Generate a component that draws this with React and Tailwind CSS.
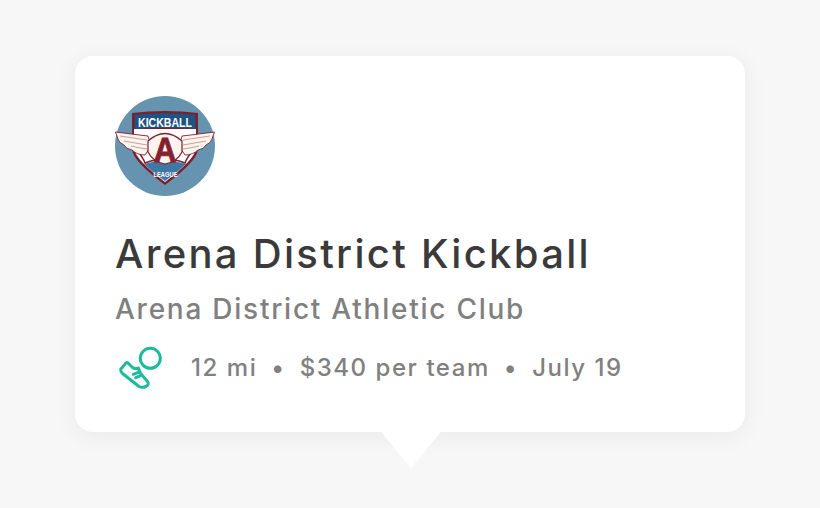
import React from "react";

function LeagueLogo() {
  return (
    <svg viewBox="0 0 100 100" className="w-[100px] h-[100px] shrink-0">
      <circle cx="50" cy="50" r="50" fill="#6693b0" />
      {/* shield */}
      <path d="M17 17 Q50 13 83 17 L83 54 Q81 66 50 89 Q19 66 17 54 Z" fill="#7c1f2c" />
      <path d="M19 33 H81 V53 Q79 64 50 86 Q21 64 19 53 Z" fill="#ffffff" />
      <path d="M19.500 19 Q50 15.500 80.500 19 L80.500 33 Q50 30 19.500 33 Z" fill="#1f5384" />
      <path d="M29 68 Q50 61 71 68 Q62 77 50 85 Q38 77 29 68 Z" fill="#3f78a4" />
      <path d="M25 58 Q29 64 30 67 Q50 59 70 67 Q71 64 75 58" fill="none" stroke="#7c1f2c" strokeWidth="1.400" />
      {/* wings */}
      <path d="M0.500 36 Q16 38 33 40 L36 50 L30 59 Q22 59 17 54 Q11 53 9 49 Q4 47 3 43 Z" fill="#fdf4ef" stroke="#7c1f2c" strokeWidth="0.900" />
      <path d="M99.500 36 Q84 38 67 40 L64 50 L70 59 Q78 59 83 54 Q89 53 91 49 Q96 47 97 43 Z" fill="#fdf4ef" stroke="#7c1f2c" strokeWidth="0.900" />
      <path d="M5 40 Q18 42 32 44 M9 45 Q20 47 32 49 M16 50 Q24 52 32 53" fill="none" stroke="#c99f96" strokeWidth="1" />
      <path d="M95 40 Q82 42 68 44 M91 45 Q80 47 68 49 M84 50 Q76 52 68 53" fill="none" stroke="#c99f96" strokeWidth="1" />
      {/* centre badge */}
      <path d="M33 45 Q50 30 67 45 L67 56 Q62 66 50 68 Q38 66 33 56 Z" fill="#fdf4ef" stroke="#7c1f2c" strokeWidth="1.200" />
      <text x="50" y="31" textAnchor="middle" fontFamily="Liberation Sans, sans-serif" fontWeight="700" fontSize="12" fill="#ffffff" textLength="54" lengthAdjust="spacingAndGlyphs">KICKBALL</text>
      <text x="50" y="65.500" textAnchor="middle" fontFamily="Liberation Sans, sans-serif" fontWeight="700" fontSize="35" fill="#86202e" textLength="23" lengthAdjust="spacingAndGlyphs" stroke="#86202e" strokeWidth="0.800">A</text>
      <text x="50.500" y="81" textAnchor="middle" fontFamily="Liberation Sans, sans-serif" fontWeight="700" fontSize="7.500" fill="#ffffff" textLength="24" lengthAdjust="spacingAndGlyphs">LEAGUE</text>
    </svg>
  );
}

function ShoeIcon() {
  return (
    <svg viewBox="0 0 48 48" className="w-[48px] h-[48px] shrink-0" fill="none" stroke="#1dbb9b" strokeWidth="3" strokeLinecap="round" strokeLinejoin="round">
      <circle cx="33.300" cy="13.300" r="10" />
      <path d="M8.700 18.300 L3.700 24.300 Q3.500 27 5.500 28.500 L22 41.500 Q25 43 29 41.500 Q32.500 39.500 30.500 36.500 L24 29 Q22 26 21.500 23 Q18 24.500 15.500 22.500 L11.500 18.500 Q10 17 8.700 18.300 Z" />
      <path d="M16.300 29.300 L21.300 27.300 M18.700 32.700 L23.500 30.700" />
    </svg>
  );
}

export default function App() {
  return (
    <div className="w-[820px] h-[508px] bg-[#f7f7f7] pt-14 pl-[75px] font-['Inter',sans-serif] overflow-hidden">
      <div className="relative w-[670px] h-[376px] bg-white rounded-[18px] shadow-[0_4px_24px_rgba(0,0,0,0.06)] pt-10 pl-10">
        <LeagueLogo />

        <h1 className="mt-[32px] text-[40px] leading-[52px] font-medium text-[#3a3a3a] tracking-[2.300px]">
          Arena District Kickball
        </h1>
        <p className="mt-[11px] text-[28px] leading-[36px] font-medium text-[#808080] tracking-[1.750px]">
          Arena District Athletic Club
        </p>

        <div className="mt-[18px] ml-[2px] flex items-center">
          <ShoeIcon />
          <div className="ml-[26px] mb-[2px] flex items-center gap-[14px] text-[24px] leading-8 font-medium text-[#808080] tracking-[1.550px]">
            <span>12 mi</span>
            <span>•</span>
            <span>$340 per team</span>
            <span>•</span>
            <span>July 19</span>
          </div>
        </div>

        {/* pointer */}
        <svg viewBox="0 0 60 36" className="absolute left-[306px] top-[376px] w-[60px] h-[36px]">
          <path d="M0 0 H60 L30 36 Z" fill="#ffffff" />
        </svg>
      </div>
    </div>
  );
}
